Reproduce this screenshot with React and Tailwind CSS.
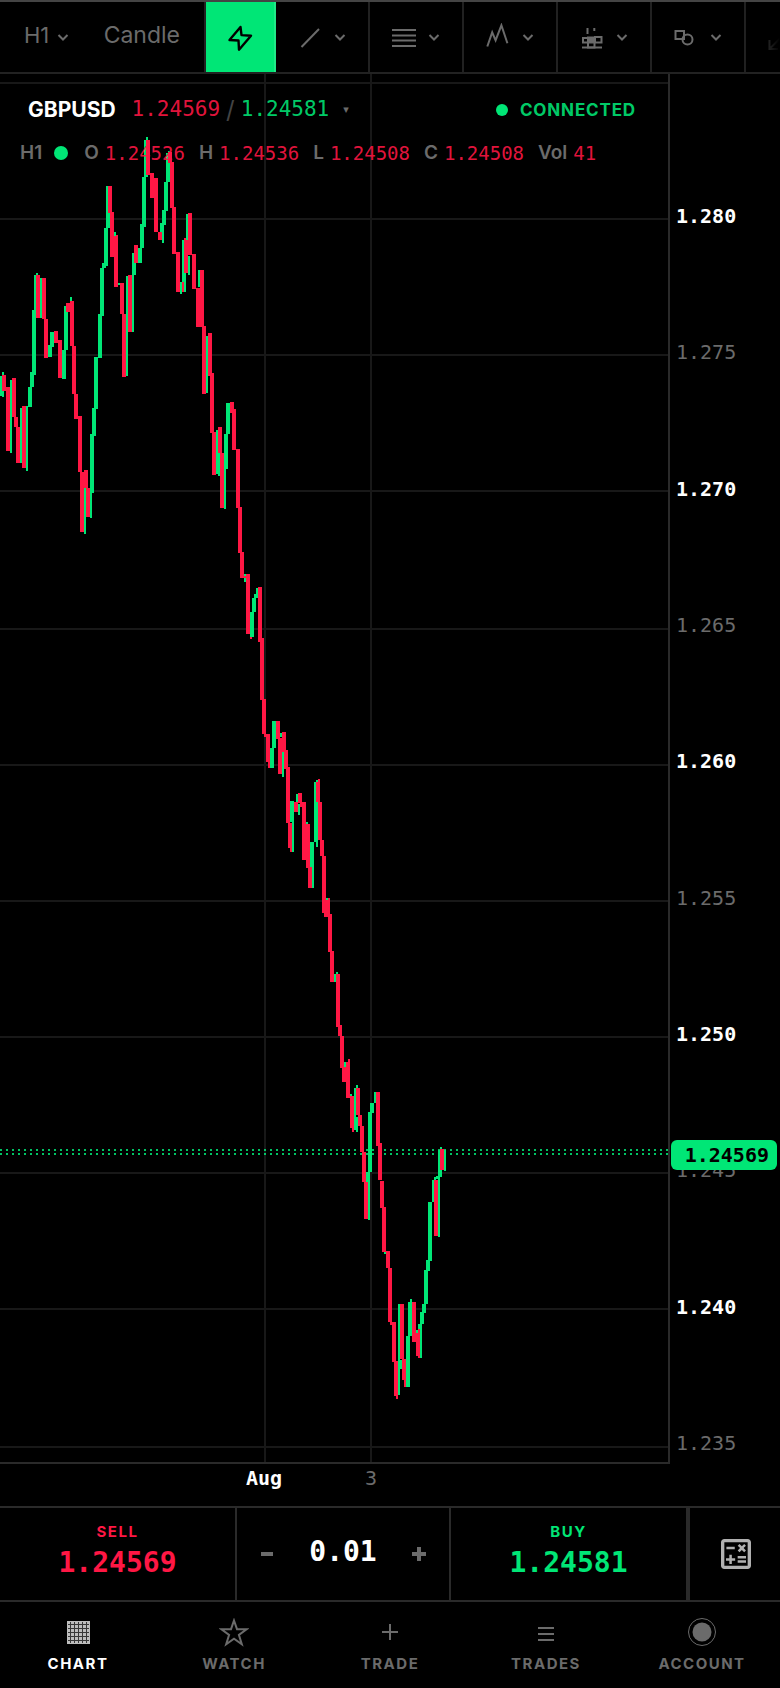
import { useState } from "react";
import { MdOutlineCalculate } from "react-icons/md";

const GREEN = "#00e676";
const RED = "#ff1744";

const BID = 1.24569;
const ASK = 1.24581;

// plot area
// -------------------------------
const PLOT_W = 668;
const PLOT_H = 1388;
const TOP_PRICE = 1.28;
const TOP_Y = 145;
const PX_PER_PRICE = 1228 / 0.045;

const priceToY = (price) => TOP_Y + (TOP_PRICE - price) * PX_PER_PRICE;

const PRICES = [1.28, 1.275, 1.27, 1.265, 1.26, 1.255, 1.25, 1.245, 1.24, 1.235];
const GRID_Y = [9, 145, 281, 417, 555, 691, 827, 963, 1099, 1235, 1373];
const GRID_X = [265, 371];

// bars: direction, left, right, top, bottom (three units per pixel)
const SERIES = [
  {
    x: 0,
    y: 46,
    bars: `g 0 6 768 828,g 6 12 757 830,r 6 18 765 812,r 18 30 800 992,g 30 36 780 998,r 36 48 775 892,r 42 54 890 922,r 48 60 922 1030,
      g 60 66 865 1030,r 66 78 857 1043,g 78 84 857 1052,g 84 96 800 862,g 90 102 757 800,g 96 108 570 765,g 102 108 465 570,
      g 108 114 458 466,r 108 120 465 593,g 120 126 475 593,r 126 138 475 598,r 132 144 598 715,g 144 156 675 712,g 150 162 635 680,
      r 162 174 632 668,r 174 186 660 775,g 186 198 690 778,g 192 204 558 690,g 210 216 532 545,r 198 216 550 575,r 210 222 543 678,
      r 216 228 678 822,r 222 234 822 897,r 234 246 888 1055,r 240 252 1055 1235,r 252 264 1050 1105,g 252 258 1105 1243,
      r 258 270 1105 1192,g 270 276 1105 1195,g 270 282 942 1118,g 276 288 865 948,g 282 294 712 868,g 294 306 583 715,
      g 300 312 443 588,g 306 318 430 443,g 312 324 325 437,g 318 330 198 325,r 324 336 198 280,r 330 342 277 412,
      r 342 354 345 500,g 342 348 337 347,g 354 366 490 496,r 360 372 490 582,r 366 378 582 770,g 378 384 468 768,r 384 396 465 635,
      g 396 402 465 635,g 396 408 400 465,r 402 414 375 430,g 414 426 385 430,g 420 432 312 385,g 426 438 170 320,
      g 432 444 60 170,g 438 444 52 62,r 438 450 60 165,r 450 462 158 235,r 462 474 175 335,r 474 486 337 360,g 480 486 310 337,
      g 486 492 310 370,g 486 498 270 315,g 492 504 185 272,g 498 510 100 187,g 504 510 93 100,r 504 516 97 130,r 510 522 125 265,
      r 516 528 262 403,r 528 540 395 515,r 534 552 487 515,g 540 546 485 522,g 546 552 360 485,g 552 558 460 515,
      r 552 564 355 460,g 558 564 282 360,r 564 576 280 405,g 564 570 408 465,r 576 588 402 508,r 588 600 505 620,
      g 594 600 450 500,r 600 612 450 622,r 606 618 618 822,g 618 624 648 818,r 624 636 638 768,r 630 642 760 940,
      r 636 648 937 1065,g 648 654 930 1062,g 654 660 1000 1067,r 654 666 920 1000,r 660 672 1000 1165,g 672 678 970 1167,
      g 672 684 942 1047,g 678 690 848 942,r 690 702 845 878,r 696 708 868 990,r 708 720 987 1163`,
  },
  {
    x: 140,
    y: 326,
    bars: `r 288 300 148 322,r 294 306 320 460,r 300 312 455 535,g 312 318 522 545,r 312 324 529 535,r 318 330 522 702,r 330 336 700 718,
      g 330 342 637 712,g 336 348 595 635,g 342 354 583 595,g 348 354 565 595,r 354 366 560 725,r 360 372 715 900,r 366 378 898 1002,
      r 372 384 1002 1012,r 378 390 1003 1087,r 384 396 1085 1105,g 390 402 1045 1103,g 396 408 963 1045,r 408 420 963 1018,
      r 414 426 1015 1122,g 420 426 1000 1012,r 426 438 997 1055,g 426 432 1057 1130,r 432 444 1050 1108,r 438 450 1100 1270,
      r 444 456 1268 1345,r 450 456 1345 1357,g 450 462 1202 1265,g 456 462 1265 1355,r 462 474 1207 1237,g 474 480 1213 1245,
      g 468 474 1183 1205,r 474 486 1180 1210,r 480 492 1210 1222,r 486 498 1207 1380,r 498 510 1273 1403,g 498 504 1265 1272`,
  },
  {
    x: 260,
    y: 666,
    bars: `r 144 156 380 443,g 150 162 307 380,g 156 162 380 445,g 162 174 185 305,g 168 174 305 320,g 162 168 127 185,r 168 180 125 185,
      g 168 174 119 127,r 174 180 118 127,r 174 186 185 300,r 180 192 300 348,r 186 198 348 520,r 192 210 480 530,r 204 210 475 480,
      g 198 204 475 480,r 204 216 522 635,r 210 222 633 725,g 222 228 702 725,g 228 234 697 703,r 228 240 703 862,r 234 246 855 887,
      r 240 252 887 983,r 246 258 980 1025,g 252 258 965 982,r 252 264 980 1025,r 258 270 967 1073,r 264 270 958 967,
      r 270 282 1067 1163,g 270 276 1062 1067,r 276 282 1163 1177,g 282 288 1043 1170,g 288 294 1130 1177,g 288 294 1035 1043,
      r 288 300 1043 1125,r 294 306 1125 1157`,
  },
  {
    x: 300,
    y: 946,
    bars: `r 180 192 317 395,r 186 198 395 485,r 192 204 485 597,g 198 210 457 485,g 204 210 485 600,g 204 216 277 457,g 210 222 250 280,
      g 222 234 215 250,r 228 240 215 377,r 234 246 370 480,r 240 252 482 563,r 246 258 560 695,g 252 258 695 702,r 258 270 692 743,
      r 264 276 743 905,r 270 282 905 914,r 276 288 905 1025,r 282 294 1022 1128,r 288 294 1128 1136,g 294 300 852 1125,
      r 300 312 852 1018,g 300 306 1020 1047,r 306 318 1018 1080,r 312 324 1080 1100,g 318 330 948 1100,g 324 336 845 948,
      g 330 336 837 845,r 336 348 845 965,r 348 360 940 1008,r 354 360 928 1014,g 348 354 930 940,g 360 366 910 1013,
      g 354 366 912 928,g 360 372 877 912,g 366 378 853 880,g 372 384 750 853,g 378 390 720 752,g 384 396 547 723,g 396 402 480 547,
      r 402 414 480 648,g 402 408 472 480,g 408 420 467 477,g 414 420 477 650,g 414 426 445 470,g 414 426 390 445,g 420 426 380 390,
      r 420 432 388 450,g 432 438 390 452`,
  },
];

const BARS = SERIES.flatMap((part) =>
  part.bars.split(",").map((row) => {
    const [dir, ...nums] = row.trim().split(" ");
    const [left, right, top, bottom] = nums.map((n) => Math.round(Number(n) / 3));
    return {
      fill: dir === "g" ? GREEN : RED,
      x: part.x + left,
      y: part.y + top,
      w: right - left,
      h: Math.max(bottom - top, 2),
    };
  })
);

function Chevron() {
  return (
    <svg className="h-3 w-3" viewBox="0 0 12 12" fill="none" stroke="currentColor" strokeWidth="2">
      <path d="M1.5 4 6 8.5 10.5 4" />
    </svg>
  );
}

const TOOLS = [
  { label: "Line tools", icon: <path d="M5.5 24 23 6" /> },
  { label: "Fibonacci tools", icon: <path d="M2 7h24M2 12.5h24M2 17.5h24M2 23h24" /> },
  { label: "Patterns", icon: <path d="M3.3 23.5 8.2 9.3l3.4 8 5.8-15 6 18" /> },
  {
    label: "Indicators",
    icon: (
      <>
        <path d="M9.5 5v6M16.3 5v3M4 24.5h20" />
        <path d="M5 15h5v4.500H5zM17 14h6.500v5.500H17zM10 19.500h6.500v5H10z" />
        <path d="M10 14.500h6v4h-6z" fill="currentColor" />
      </>
    ),
  },
  {
    label: "Shapes",
    icon: (
      <>
        <path d="M3.500 8h8.500v8H3.500z" />
        <circle cx="15.500" cy="16.500" r="5" />
      </>
    ),
  },
];

function Toolbar() {
  return (
    <div className="relative flex h-[74px] overflow-hidden border-y-2 border-t-[#444] border-b-[#222] text-[#6b6b6b]">
      <div className="flex w-[206px] shrink-0 items-center justify-between border-r-2 border-white/13 pr-6 pb-1 pl-6 text-[22px]">
        <button className="flex items-center gap-2">
          H1
          <span className="pt-1">
            <Chevron />
          </span>
        </button>
        <button className="text-[23px]">Candle</button>
      </div>
      <button
        aria-label="Quick trade"
        className="flex w-[70px] shrink-0 items-center justify-center border-r-2 border-white/13 bg-[#00e676] text-black"
      >
        <svg className="h-7 w-7" viewBox="0 0 28 28" fill="none" stroke="currentColor" strokeWidth="2.4" strokeLinejoin="round">
          <path d="M14.500 4 3.500 17l9 .500.500 9.200 12-14-9.500-.600z" />
        </svg>
      </button>
      {TOOLS.map((tool) => (
        <button
          key={tool.label}
          aria-label={tool.label}
          className="flex shrink-0 items-center gap-2.5 border-r-2 border-white/13 pr-[22px] pl-5"
        >
          <svg className="h-7 w-7" viewBox="0 0 28 28" fill="none" stroke="currentColor" strokeWidth="2">
            {tool.icon}
          </svg>
          <Chevron />
        </button>
      ))}
      <button aria-label="Arrows" className="flex shrink-0 items-center pt-4 pl-5">
        <svg className="h-7 w-7" viewBox="0 0 28 28" fill="none" stroke="currentColor" strokeWidth="2">
          <path d="M3.500 9v9H12M3.500 18l10-10" />
        </svg>
      </button>
      <div className="pointer-events-none absolute top-0 right-0 -bottom-0.5 w-9 bg-linear-to-r from-transparent to-black" />
    </div>
  );
}

const OHLC = [
  { label: "O", value: "1.24526" },
  { label: "H", value: "1.24536" },
  { label: "L", value: "1.24508" },
  { label: "C", value: "1.24508" },
  { label: "Vol", value: "41" },
];

function Chart() {
  return (
    <div className="flex flex-1">
      <div className="relative flex-1 border-r-2 border-b-2 border-[#2a2a2a]">
        <svg
          className="absolute inset-0 h-full w-full"
          viewBox={`0 0 ${PLOT_W} ${PLOT_H}`}
          preserveAspectRatio="none"
          shapeRendering="crispEdges"
        >
          <g stroke="#181818" strokeWidth="2">
            {GRID_Y.map((y) => (
              <line key={y} x1="0" x2={PLOT_W} y1={y} y2={y} />
            ))}
            {GRID_X.map((x) => (
              <line key={x} x1={x} x2={x} y1="0" y2={PLOT_H} />
            ))}
          </g>
          <g stroke={GREEN} strokeWidth="2" strokeDasharray="2 4" opacity="0.85">
            <line x1="0" x2={PLOT_W} y1="1076" y2="1076" />
            <line x1="0" x2={PLOT_W} y1="1080" y2="1080" />
          </g>
          {BARS.map((bar, i) => (
            <rect key={i} x={bar.x} y={bar.y} width={bar.w} height={bar.h} fill={bar.fill} />
          ))}
        </svg>

        {/* symbol and quote */}
        <div className="absolute inset-x-0 top-5 flex items-center justify-between pr-8 pl-7">
          <div className="flex items-center">
            <span className="mr-4 text-[21px] leading-7 font-bold">GBPUSD</span>
            <span className="font-['DejaVu_Sans_Mono',monospace] text-[21px] text-[#ff1744]/90">{BID}</span>
            <span className="mx-1.5 text-2xl leading-7 text-[#444]">/</span>
            <span className="font-['DejaVu_Sans_Mono',monospace] text-[21px] text-[#00e676]/90">{ASK}</span>
            <button aria-label="Symbol menu" className="ml-3.5 font-['DejaVu_Sans',sans-serif] text-[11px] text-[#6b6b6b]">
              ▾
            </button>
          </div>
          <div className="flex items-center gap-3 text-[17px] leading-7 font-bold tracking-wider text-[#00e676]/90">
            <span className="h-3 w-3 rounded-full bg-[#00e676]" />
            CONNECTED
          </div>
        </div>

        {/* last candle */}
        <div className="absolute top-[65px] left-5 flex items-center text-[19px] leading-7 font-semibold whitespace-nowrap text-[#6b6b6b]">
          <span>H1</span>
          <span className="mr-4 ml-3 h-3.5 w-3.5 rounded-full bg-[#00e676]" />
          <div className="flex gap-3.5">
            {OHLC.map((item) => (
              <span key={item.label} className="flex items-center gap-1.5">
                {item.label}
                <span className="font-['DejaVu_Sans_Mono',monospace] font-normal text-[#ff1744]/90">{item.value}</span>
              </span>
            ))}
          </div>
        </div>
      </div>

      {/* price axis */}
      <div className="relative w-[110px] font-['DejaVu_Sans_Mono',monospace] text-xl leading-6">
        <ul className="flex h-full flex-col justify-between pt-[130px] pb-[9px] pl-1.5">
          {PRICES.map((price, i) => (
            <li key={price} className={i % 2 === 0 ? "font-bold" : "text-[#6b6b6b]"}>
              {price.toFixed(3)}
            </li>
          ))}
        </ul>
        <div
          className="absolute right-[3px] left-px -translate-y-1/2 rounded-md bg-[#00e676] py-[3px] pr-2 text-right font-bold text-black"
          style={{ top: `${(priceToY((BID + ASK) / 2) / PLOT_H) * 100}%` }}
        >
          {BID}
        </div>
      </div>
    </div>
  );
}

function TimeAxis() {
  return (
    <div className="relative h-[42px] font-['DejaVu_Sans_Mono',monospace] text-xl leading-7">
      <span className="absolute left-[264px] -translate-x-1/2 font-bold">Aug</span>
      <span className="absolute left-[371px] -translate-x-1/2 text-[#6b6b6b]">3</span>
    </div>
  );
}

function TradeBar() {
  const [lots, setLots] = useState("0.01");

  const step = (delta) => {
    setLots(Math.max(0.01, Number(lots) + delta).toFixed(2));
  };

  return (
    <div className="flex h-[94px] border-t-2 border-[#2a2a2a]">
      <button className="flex flex-1 flex-col items-center justify-center text-[#ff1744]">
        <span className="text-[15px] leading-[18px] font-bold tracking-widest">SELL</span>
        <span className="font-['DejaVu_Sans_Mono',monospace] text-[28px] leading-[44px] font-bold">{BID}</span>
      </button>
      <div className="flex w-[216px] items-center justify-between border-x-2 border-[#2a2a2a] px-5 text-[#6b6b6b]">
        <button aria-label="Decrease lots" className="flex h-5 w-5 items-center justify-center" onClick={() => step(-0.01)}>
          <span className="h-1 w-3 bg-[#6b6b6b]" />
        </button>
        <input
          aria-label="Lots"
          className="w-[100px] bg-transparent pb-1 text-center font-['DejaVu_Sans_Mono',monospace] text-[28px] leading-10 font-bold text-white outline-none"
          value={lots}
          onChange={(e) => setLots(e.target.value)}
        />
        <button aria-label="Increase lots" className="flex h-5 w-5 items-center justify-center" onClick={() => step(0.01)}>
          <svg className="h-3.5 w-3.5" viewBox="0 0 14 14" stroke="currentColor" strokeWidth="4">
            <path d="M0 7h14M7 0v14" />
          </svg>
        </button>
      </div>
      <button className="flex flex-1 flex-col items-center justify-center text-[#00e676]">
        <span className="text-[15px] leading-[18px] font-bold tracking-widest">BUY</span>
        <span className="font-['DejaVu_Sans_Mono',monospace] text-[28px] leading-[44px] font-bold">{ASK}</span>
      </button>
      <button
        aria-label="Calculator"
        className="flex w-[94px] items-center justify-center border-l-4 border-[#2a2a2a] pl-0.5 text-[#b0b0b0]"
      >
        <MdOutlineCalculate size={40} />
      </button>
    </div>
  );
}

const TABS = [
  {
    label: "CHART",
    icon: (
      <>
        <path d="M4 3h23v23H4z" fill="#bdbdbd" />
        <path
          d="M7.500 4v21M11.500 4v21M15.500 4v21M19.500 4v21M23.500 4v21M5 6.500h21M5 10.500h21M5 14.500h21M5 18.500h21M5 22.500h21"
          stroke="#000"
          strokeWidth="1"
          strokeOpacity="0.7"
          shapeRendering="crispEdges"
        />
      </>
    ),
  },
  {
    label: "WATCH",
    icon: (
      <path
        d="M15 2.500 18 11.200h9.600l-7.700 5.700 2.900 9.300L15 20.700l-7.800 5.500 2.900-9.300-7.700-5.700H12z"
        fill="none"
        stroke="currentColor"
        strokeWidth="2"
      />
    ),
  },
  { label: "TRADE", icon: <path d="M7 14h16M15 6v16" fill="none" stroke="currentColor" strokeWidth="2" /> },
  { label: "TRADES", icon: <path d="M7 10h16M7 16h16M7 22h16" fill="none" stroke="currentColor" strokeWidth="2" /> },
  {
    label: "ACCOUNT",
    icon: (
      <>
        <circle cx="15" cy="14" r="13.500" fill="none" stroke="currentColor" strokeWidth="1" />
        <circle cx="15" cy="14" r="9.500" fill="currentColor" />
      </>
    ),
  },
];

function TabBar() {
  const [active, setActive] = useState("CHART");

  return (
    <nav className="grid h-[88px] grid-cols-5 border-t-2 border-[#2a2a2a]">
      {TABS.map((tab) => (
        <button
          key={tab.label}
          onClick={() => setActive(tab.label)}
          className={`flex flex-col items-center gap-1 pt-4 text-[15px] leading-6 font-bold tracking-widest ${
            tab.label === active ? "text-white" : "text-[#6b6b6b]"
          }`}
        >
          <svg className="h-[30px] w-[30px]" viewBox="0 0 30 30">
            {tab.icon}
          </svg>
          {tab.label}
        </button>
      ))}
    </nav>
  );
}

export default function App() {
  return (
    <div className="flex min-h-screen flex-col bg-black font-['Inter',sans-serif] text-white">
      <Toolbar />
      <Chart />
      <TimeAxis />
      <TradeBar />
      <TabBar />
    </div>
  );
}
